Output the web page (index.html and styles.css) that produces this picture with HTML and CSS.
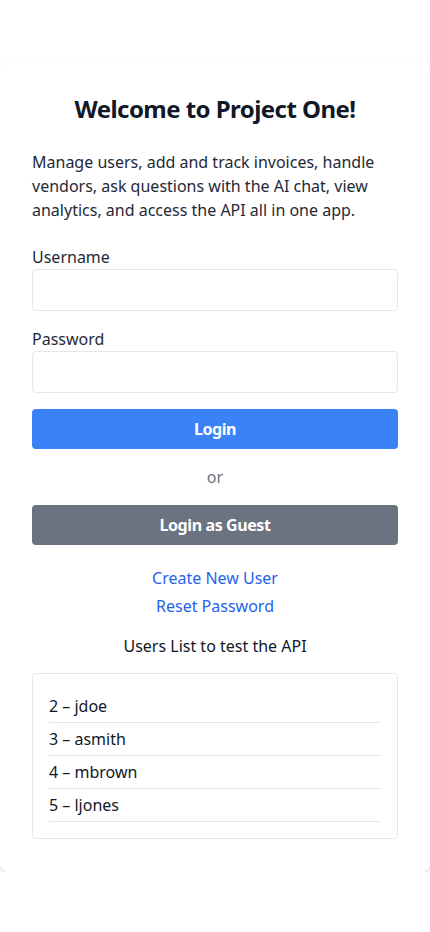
FILE: index.html
```html
<!DOCTYPE html>
<html lang="en">
<head>
<meta charset="utf-8">
<title>Project One</title>
<link rel="stylesheet" href="styles.css">
</head>
<body>
<main class="page">
  <section class="card">
    <h1 class="title">Welcome to Project One!</h1>
    <p class="intro">Manage users, add and track invoices, handle vendors, ask questions with the AI chat, view analytics, and access the API all in one app.</p>
    <form class="form">
      <label class="field">
        <span class="label">Username</span>
        <input class="input" type="text">
      </label>
      <label class="field">
        <span class="label">Password</span>
        <input class="input" type="password">
      </label>
      <button class="btn btn-primary" type="button">Login</button>
      <div class="or">or</div>
      <button class="btn btn-guest" type="button">Login as Guest</button>
    </form>
    <div class="links">
      <a class="link" href="#">Create New User</a>
      <a class="link" href="#">Reset Password</a>
    </div>
    <div class="users-title">Users List to test the API</div>
    <div class="users-box">
      <ul class="users">
        <li>2 – jdoe</li>
        <li>3 – asmith</li>
        <li>4 – mbrown</li>
        <li>5 – ljones</li>
      </ul>
    </div>
  </section>
</main>
</body>
</html>
```
FILE: styles.css
```css
* { box-sizing: border-box; }
html, body { margin: 0; padding: 0; background: #fff; }
body {
  font-family: "Noto Sans", "Open Sans", sans-serif;
  font-size: 16px;
  line-height: 24px;
  color: #1f2937;
}
.page { padding-top: 61px; }
.card {
  background: #fff;
  border-radius: 8px;
  box-shadow: 0 1px 3px rgba(0,0,0,0.12), 0 1px 2px rgba(0,0,0,0.06);
  padding: 32px 32px 33px;
}
.title {
  margin: 0;
  text-align: center;
  font-size: 24px;
  line-height: 32px;
  font-weight: 700;
  color: #111827;
  letter-spacing: -0.55px;
}
.intro { margin: 25px 0 23px; }
.form { display: flex; flex-direction: column; gap: 16px; }
.field { display: flex; flex-direction: column; }
.label { line-height: 24px; }
.input {
  height: 42px;
  border: 1px solid #e5e7eb;
  border-radius: 4px;
  padding: 8px;
  font: inherit;
  margin: 0;
}
.btn {
  height: 40px;
  border: 0;
  border-radius: 4px;
  color: #fff;
  font: inherit;
  font-weight: 700;
  letter-spacing: -0.4px;
  margin: 0;
}
.btn-primary { background: #3b82f6; }
.btn-guest { background: #6b7280; }
.or { text-align: center; color: #6b7280; }
.links {
  margin-top: 21px;
  display: flex;
  flex-direction: column;
  align-items: center;
  gap: 4px;
}
.link { color: #2563eb; text-decoration: none; }
.users-title { margin-top: 16px; text-align: center; color: #111827; }
.users-box {
  margin-top: 15px;
  border: 1px solid #e5e7eb;
  border-radius: 4px;
  padding: 16px;
}
.users { list-style: none; margin: 0; padding: 0; color: #111827; }
.users li { padding: 4px 0; border-bottom: 1px solid #e5e7eb; }
```
